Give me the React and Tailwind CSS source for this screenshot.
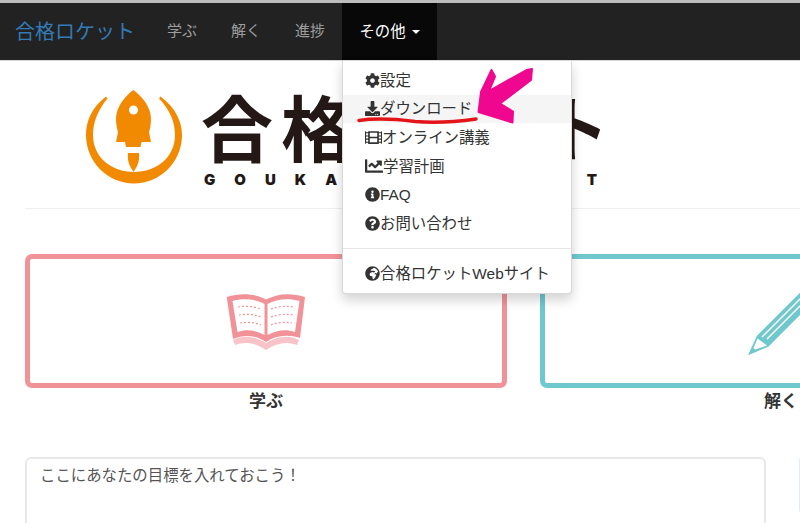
import React from "react";
import { FaCog, FaDownload, FaFilm, FaChartLine, FaInfoCircle, FaQuestionCircle, FaGlobeAfrica } from "react-icons/fa";

const font = { fontFamily: '"Liberation Sans", "Noto Sans CJK JP", sans-serif' };

function Rocket() {
  return (
    <svg width="96" height="96" viewBox="86 90 96 96" className="shrink-0">
      <path fill="#f18a00" d="M106 96.500C91 108 86 122 86 135C86 162 108 183.500 134 183.500C160 183.500 182 162 182 135C182 122 176 108 160.500 96.500L159 98.500C170 110 175 122 175 135C175 157 157 172 134 172C111 172 93 157 93 135C93 122 98 110 107.500 98.500Z" />
      <path fill="#f18a00" d="M133.300 90C142 96 151 107 151 119C151 124 150 129 149 132L151 142H141.500L140.500 147H126L125 142H116L118 132C117 129 116 124 116 119C116 107 125 96 133.300 90Z" />
      <circle cx="133.500" cy="110" r="4.500" fill="#fff" />
      <path fill="#f18a00" d="M128 153H139C140 161 137 167 133.500 172C130 167 127 161 128 153Z" />
    </svg>
  );
}

function Book() {
  return (
    <svg width="80" height="58" viewBox="226 294 80 58" className="shrink-0">
      <path fill="#f9c3c8" d="M233 340C245 334 256 337 266 343C276 337 287 334 299 340L297 345C287 341 276 343 266 350C256 343 245 341 235 345Z" />
      <path fill="#f19299" d="M226.700 297C242 292 256 294 266 299.500C276 294 290 292 305 297L300 338C288 334 276 335 266 342C256 335 244 334 233 339Z" />
      <path fill="#fff" d="M232.500 301C243 298 256 299 264.500 304V335C255 330 246 329 237.500 332Z" />
      <path fill="#fff" d="M267.500 304C276 299 289 298 299.500 301L295 332C286 329 277 330 267.500 335Z" />
      <g stroke="#f19299" strokeWidth="1.200" strokeDasharray="2 2" fill="none">
        <path d="M238 307C245 306 253 306 261 309" />
        <path d="M239 315C246 314 253 314 261 317" />
        <path d="M240 323C247 322 254 322 261 325" />
        <path d="M271 309C279 306 287 306 294 307" />
        <path d="M271 317C279 314 286 314 293 315" />
        <path d="M271 325C278 322 285 322 292 323" />
      </g>
    </svg>
  );
}

function Pencil() {
  return (
    <svg width="66" height="64" viewBox="748 290 66 64" className="shrink-0 overflow-visible">
      <path fill="#6fc8ce" d="M748.300 354L756.700 335L830 261.700L830 284L768.300 345.700Z" />
      <path fill="#fff" d="M757.500 337.500L752.500 349.500L767 344.500Z" />
      <path fill="#6fc8ce" d="M748.300 354L752 346L757 350Z" />
      <path stroke="#fff" strokeWidth="1.500" fill="none" d="M762 336L830 268M767 338L830 275" />
    </svg>
  );
}

function Item({ icon, children, active }) {
  return (
    <div className={`flex h-[28.600px] items-center pl-[22px] text-[15.400px] text-[#333] ${active ? "bg-[#f5f5f5]" : ""}`}>
      {icon}
      <span>{children}</span>
    </div>
  );
}

export default function App() {
  return (
    <div className="relative h-[523px] w-[800px] overflow-hidden bg-white" style={font}>
      <div className="h-[3px] bg-[#bdbdbd]" />
      <nav className="flex h-[58px] w-full items-stretch border-b border-[#d8d8d8] bg-[#222]">
        <div className="flex w-[150px] items-center pl-[15px] text-[20px] text-[#337ab7]">合格ロケット</div>
        <div className="flex w-[64px] items-center justify-center text-[15px] text-[#9d9d9d]">学ぶ</div>
        <div className="flex w-[64px] items-center justify-center text-[15px] text-[#9d9d9d]">解く</div>
        <div className="flex w-[64px] items-center justify-center text-[15px] text-[#9d9d9d]">進捗</div>
        <div className="flex w-[95px] items-center justify-center gap-[6px] bg-[#080808] text-[15.400px] text-white">
          <span>その他</span>
          <span className="h-0 w-0 border-x-[4.500px] border-t-[4px] border-x-transparent border-t-white" />
        </div>
      </nav>

      <main className="w-[1100px] px-[25px]">
        <header className="flex items-start pb-[22px] pl-[61px] pt-[29px]">
          <Rocket />
          <div className="ml-[19px] mt-[-2px] text-[#231815]">
            <div className="flex h-[86px] items-center text-[72px] font-bold leading-none">
              <span className="tracking-[8px]">合格</span>
              <span className="tracking-[-10px]">ロケッ</span>
              <span className="inline-block origin-left scale-x-[0.85]">ト</span>
            </div>
            <div className="ml-[3px] mt-[-2px] text-[15px] font-black leading-none tracking-[19px] [font-family:Inter,sans-serif]">GOUKAKU ROCKET</div>
          </div>
        </header>
        <hr className="mt-[-1px] border-t border-[#eee]" />

        <section className="mt-[45px] grid grid-cols-[482px_482px] gap-x-[33px]">
          <div>
            <div className="flex h-[134px] items-center justify-center rounded-[7px] border-[5px] border-[#f19299] pt-[4px]"><Book /></div>
            <div className="mt-[2px] text-center text-[17px] font-bold leading-[24px] text-[#333]">学ぶ</div>
          </div>
          <div>
            <div className="flex h-[134px] items-center justify-center rounded-[7px] border-[5px] border-[#6fc8ce] pt-[4px]"><Pencil /></div>
            <div className="mt-[2px] text-center text-[17px] font-bold leading-[24px] text-[#333]">解く</div>
          </div>
        </section>

        <section className="mt-[43px] flex gap-[33px]">
          <div className="h-[120px] w-[741px] rounded-[6px] border-2 border-[#e8e8e8] px-[13px] py-[5px] text-[15.400px] leading-[24px] text-[#555]">ここにあなたの目標を入れておこう！</div>
          <div className="h-[56px] w-[200px] rounded-[4px] bg-[#d9edf7]" />
        </section>
      </main>

      <div className="absolute left-[342px] top-[60px] w-[230px] rounded-b-[4px] border border-[rgba(0,0,0,0.15)] bg-white pb-[5px] pt-[5px] shadow-[0_6px_12px_rgba(0,0,0,0.175)]">
        <Item icon={<FaCog size={15} />}>設定</Item>
        <Item icon={<FaDownload size={15} />} active>ダウンロード</Item>
        <Item icon={<FaFilm size={17} />}>オンライン講義</Item>
        <Item icon={<FaChartLine size={18} />}>学習計画</Item>
        <Item icon={<FaInfoCircle size={15} />}>FAQ</Item>
        <Item icon={<FaQuestionCircle size={15} />}>お問い合わせ</Item>
        <div className="mb-[11px] mt-[10px] h-px bg-[#e5e5e5]" />
        <Item icon={<FaGlobeAfrica size={15} />}>合格ロケットWebサイト</Item>
      </div>

      <svg className="pointer-events-none absolute left-[350px] top-[60px]" width="190" height="70" viewBox="350 60 190 70">
        <path fill="none" stroke="#e3151a" strokeWidth="3.500" strokeLinecap="round" d="M359 120.500C375 118 395 119 415 121.500C432 123 455 122 476 119" />
        <path fill="#f0078f" stroke="#f0078f" strokeWidth="2" strokeLinejoin="round" d="M491.500 70L495 76.500L489 91L526.500 70L532 69L531 80L500 103.500L513 111.500L512.500 122.500L478.500 112L481 92Z" />
      </svg>
    </div>
  );
}
